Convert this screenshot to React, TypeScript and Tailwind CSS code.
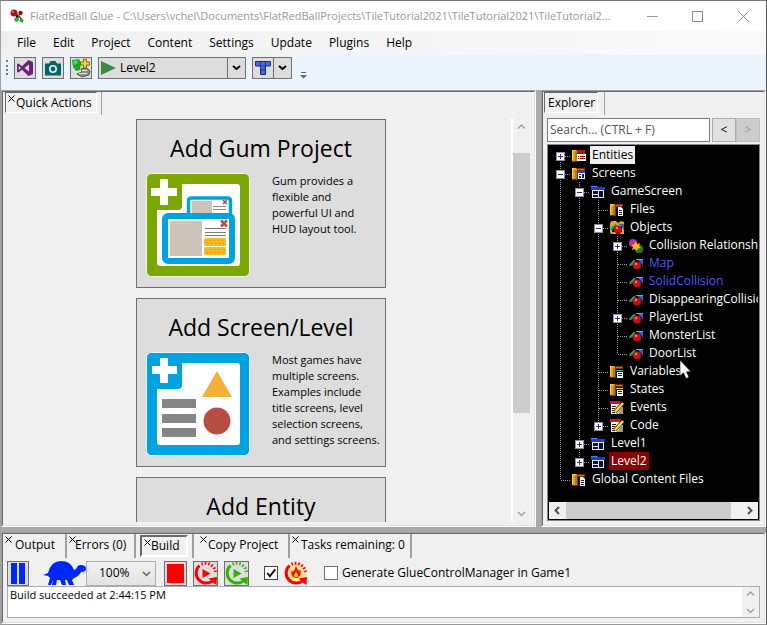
import type { ReactNode } from "react";

/* ---------- shared pieces ---------- */

function Panel({ className, children }: { className: string; children: ReactNode }) {
  return (
    <section className={"flex min-w-0 flex-col border border-t-[#a0a0a0] border-r-white border-b-white border-l-[#a0a0a0] " + className}>
      <div className="flex min-h-0 min-w-0 flex-1 flex-col border border-t-[#696969] border-r-[#e3e3e3] border-b-[#e3e3e3] border-l-[#696969] bg-[#f0f0f0]">
        {children}
      </div>
    </section>
  );
}

function CloseMark() {
  return (
    <svg viewBox="0 0 7 7" className="absolute top-0.5 left-0.5 h-[7px] w-[7px]" fill="none" stroke="#000" strokeWidth="1">
      <path d="M.5.5l6 6M6.5.5l-6 6" />
    </svg>
  );
}

function Chevron({ dir, className }: { dir: "up" | "down" | "left" | "right"; className: string }) {
  const d = {
    up: "M1 6.500L4.500 3L8 6.500",
    down: "M1 3L4.500 6.500L8 3",
    left: "M6 1L2.500 4.500L6 8",
    right: "M3 1L6.500 4.500L3 8",
  }[dir];
  return (
    <svg viewBox="0 0 9 9" className={className} fill="none" stroke="currentColor" strokeWidth="1.500">
      <path d={d} />
    </svg>
  );
}

function Arrow() {
  return (
    <svg viewBox="0 0 9 6" className="h-1.5 w-[9px]" fill="none" stroke="#000" strokeWidth="2">
      <path d="M1 1l3.500 3L8 1" />
    </svg>
  );
}

/* ---------- toolbar ---------- */

const toolButton = "flex h-[22px] w-[22px] items-center justify-center border border-[#707070] bg-[#ddd]";

function StudioIcon() {
  return (
    <svg viewBox="0 0 18 18" className="h-[18px] w-[18px]">
      <path fill="#68217a" fillRule="evenodd" d="M12.500 1l4.500 2v12l-4.500 2L6 10.800 2.500 13.500 1 12.700V5.300l1.500-.8L6 7.200zM13 5.500L8.500 9l4.500 3.500zM2.700 7v4L5 9z" />
    </svg>
  );
}

function CameraIcon() {
  return (
    <svg viewBox="0 0 18 18" className="h-[18px] w-[18px]">
      <path fill="#00666a" d="M1 4.500h4L6.500 2h5L13 4.500h4v12H1z" />
      <circle cx="9" cy="10" r="3.200" fill="none" stroke="#e4f2f2" strokeWidth="1.600" />
    </svg>
  );
}

function ImportIcon() {
  return (
    <svg viewBox="0 0 20 20" className="h-5 w-5">
      <path fill="#1fa32c" d="M1 2l7-1 2 4-1 7-4 1-3-4z" />
      <path fill="#56d657" d="M2 3l4-1 1 3-4 2z" />
      <path fill="#8d8d86" stroke="#444" strokeWidth=".8" d="M10 11l5-2 4 4-1 4-7 2-5-3 5-2z" />
      <path stroke="#e8e8e8" d="M8 15.500h8M11 12.500h5" />
      <path fill="#f5d033" stroke="#6b5200" strokeWidth=".8" d="M12.500 1h3v3h3v3h-3v3h-3V7h-3V4h3z" />
    </svg>
  );
}

function TileIcon() {
  return (
    <svg viewBox="0 0 16 14" className="h-3.5 w-4">
      <path fill="#4a66e0" stroke="#1c2b80" d="M.5.500h15v4.500h-5v8.500h-5V5H.500z" />
      <path stroke="#1c2b80" strokeWidth=".8" d="M5.500 1v4h5V1M5.500 9h5" fill="none" />
    </svg>
  );
}

/* ---------- quick action artwork ---------- */

function GumArt() {
  return (
    <svg viewBox="0 0 104 104" className="h-[104px] w-[104px] shrink-0">
      <rect x=".5" y=".5" width="103" height="103" rx="5" fill="#7aa800" stroke="#f2f5e6" />
      <path fill="#fff" d="M36 11h55q3 0 3 3v76q0 3-3 3H14q-3 0-3-3V37h21q4 0 4-4z" />
      <path fill="#fff" d="M14 6h8v9h9v8h-9v9h-8v-9H5v-8h9z" />
      <path fill="#fff" stroke="#00a3e2" strokeWidth="3.500" d="M42.500 42V28q0-3 3-3h36q3 0 3 3v14" />
      <path fill="#cdc5b9" d="M46 28h20v12H46z" />
      <path stroke="#8b8b8b" d="M67 33.500h13M67 36.500h13" />
      <path stroke="#b54e40" strokeWidth="1.600" d="M77 27l4 4M81 27l-4 4" />
      <rect x="19" y="43" width="67" height="45" rx="3" fill="#fff" stroke="#00a3e2" strokeWidth="6" />
      <path fill="#cdc5b9" d="M24 48h32v35H24z" />
      <path stroke="#7d7d7d" d="M59 55.500h21M59 59.500h21M59 62.500h21" />
      <path stroke="#b54e40" strokeWidth="2.500" d="M75 47.500l6 6M81 47.500l-6 6" />
      <rect x="58" y="65" width="22" height="8" rx="1.500" fill="#f5bb1b" />
      <rect x="58" y="74" width="22" height="8" rx="1.500" fill="#f5bb1b" />
      <path stroke="#e8892b" strokeDasharray="1 3" d="M60 67.500h19M61 70.500h18M60 76.500h19M61 79.500h18" />
    </svg>
  );
}

function ScreenArt() {
  return (
    <svg viewBox="0 0 104 104" className="h-[104px] w-[104px] shrink-0">
      <rect x=".5" y=".5" width="103" height="103" rx="5" fill="#00a3e2" stroke="#e8f6fc" />
      <path fill="#fff" d="M36 11h55q3 0 3 3v76q0 3-3 3H14q-3 0-3-3V37h21q4 0 4-4z" />
      <path fill="#fff" d="M14 6h8v8h9v8h-9v9h-8v-9H6v-8h8z" />
      <path fill="#858585" d="M16 47h34v9H16zM16 62h34v9H16zM16 76h34v9H16z" />
      <path fill="#f2b13b" d="M71 19l15 26H56z" />
      <circle cx="71" cy="69" r="13.500" fill="#b54e40" />
    </svg>
  );
}

function ActionCard({ title, lines, art }: { title: string; lines: string[]; art?: ReactNode }) {
  return (
    <button type="button" className="flex h-[169px] w-[250px] shrink-0 flex-col border border-[#707070] bg-[#ddd] pt-3 pl-[9px] text-left">
      <span className="mb-[9px] w-full pr-[9px] text-center text-[23px] leading-8">{title}</span>
      <span className="flex gap-[22px]">
        {art}
        <span className="flex flex-col text-[11px] leading-4 whitespace-nowrap">
          {lines.map((l) => (
            <span key={l}>{l}</span>
          ))}
        </span>
      </span>
    </button>
  );
}

/* ---------- explorer tree ---------- */

type Icon = "entities" | "screens" | "screen" | "files" | "objects" | "collision" | "object" | "variables" | "states" | "code";

function Folder({ children }: { children: ReactNode }) {
  return (
    <>
      <path fill="#7a2f06" d="M1 2h13v3H7v9H1z" />
      <path fill="#e0a01a" d="M1 2h4l1 1v10H1z" />
      <path fill="#f6cf4a" d="M1 2h3v1H2v9H1z" />
      <path fill="#b87a10" d="M4 4h2v9H4zM7 3h6v1H7z" />
      {children}
    </>
  );
}

function ObjectShapes() {
  return (
    <>
      <path fill="#0b7a52" d="M1 10l5-6 2 1-4 5z" />
      <path fill="#35b98a" d="M1 9l5-5 1 .5L2 9.500z" />
      <path fill="#1f66d8" d="M8 3h7v7l-2-3-2-2z" />
      <path fill="#6aa6f5" d="M8 3h7v1H8z" />
      <circle cx="9" cy="9.500" r="4" fill="#cc1010" />
      <circle cx="8" cy="8" r="1.200" fill="#ff7a6a" />
      <path fill="#6d0505" d="M6 12q3 2 6 0-1 2-3 2t-3-2z" />
    </>
  );
}

function TreeIcon({ icon }: { icon: Icon }) {
  let art: ReactNode;
  switch (icon) {
    case "entities":
      art = (
        <Folder>
          <path fill="#c81010" d="M6 2h8v2H6zM7 5h7v1H7z" />
          <path fill="#fff" d="M6 6h9v7H6z" />
          <path stroke="#a00" d="M7 8.500h1M9 8.500h5M7 10.500h1M9 10.500h5" />
        </Folder>
      );
      break;
    case "screens":
      art = (
        <Folder>
          <path fill="#1743d8" d="M7 5h7v2H7z" />
          <path fill="#fff" d="M7 7h7v6H7z" />
          <path fill="#14206b" d="M8 8h2v1H8zM8 10h2v2H8zM11 8h2v4h-2z" />
        </Folder>
      );
      break;
    case "screen":
      art = (
        <>
          <path fill="#123fe0" d="M1 2h6l1 1h7v3H1z" />
          <path fill="#5b86ff" d="M1 2h6v1H1z" />
          <path fill="#e6e9f5" d="M2 6h12v8H2z" />
          <path fill="#0a0f38" d="M3 7h5v3H3zM3 11h5v2H3zM9 7h4v6H9z" />
        </>
      );
      break;
    case "files":
      art = (
        <Folder>
          <path fill="#000" d="M7 5h8v9H7z" />
          <path fill="#fff" d="M9 5h3l2 2v7H9z" />
          <path stroke="#222" d="M10 8.500h3M10 10.500h3M10 12.500h3" />
        </Folder>
      );
      break;
    case "variables":
      art = (
        <Folder>
          <path fill="#21b7b5" d="M7 6h7v1H7z" />
          <path fill="#fff" d="M8 8h6v6H8z" />
          <path stroke="#222" d="M9 9.500h4M9 11.500h4" />
        </Folder>
      );
      break;
    case "states":
      art = (
        <Folder>
          <path fill="#f5d33a" d="M7 6h7v1H7z" />
          <path fill="#fff" d="M8 8h6v6H8z" />
          <path stroke="#222" d="M9 9.500h4M9 11.500h4" />
        </Folder>
      );
      break;
    case "objects":
      art = (
        <>
          <path fill="#e3aa18" d="M1 4q0-3 3-3h3l2 2 3-2 3 1v12h-4l-2-2-2 2H2l-1-2z" />
          <path fill="#000" d="M3 6h10v6H3z" />
          <ObjectShapes />
        </>
      );
      break;
    case "collision":
      art = (
        <>
          <circle cx="5" cy="5" r="4" fill="#b030b0" />
          <circle cx="11" cy="11" r="4" fill="#12820f" stroke="#555" strokeWidth=".8" />
          <path fill="#ffb520" d="M8 3l1 3 3-1-1 3 2 2-3 .5-1 2-2-1.500-3 1 1-3-1-2 2-1z" />
        </>
      );
      break;
    case "code":
      art = (
        <>
          <path fill="#f2f2f2" d="M2 4h10v10H2z" />
          <path fill="#e31212" d="M1 1h11l-1 3H1z" />
          <path stroke="#222" d="M3 6.500h4M3 8.500h3M3 10.500h2M3 12.500h3" />
          <path stroke="#3d3000" strokeWidth="4" d="M6 12l8-9" />
          <path stroke="#ffd92e" strokeWidth="2.400" d="M6 12l8-9" />
          <path fill="#999" d="M12 7h2v7H7l3-2z" />
        </>
      );
      break;
    default:
      art = <ObjectShapes />;
  }
  return (
    <svg viewBox="0 0 16 16" className="mt-0.5 mr-[3px] ml-px h-4 w-4 shrink-0">
      {art}
    </svg>
  );
}

/* Guide cells: "|" passes through, "t" branches, "l" ends, "r" starts, " " is empty. */
function Guide({ kind, box }: { kind: string; box?: string }) {
  const lines: Record<string, string> = {
    "|": "M9.500 0V18",
    t: "M9.500 0V18M10 10.500H19",
    l: "M9.500 0V10M10 10.500H19",
    r: "M9.500 10V18M10 10.500H19",
    " ": "",
  };
  return (
    <svg viewBox="0 0 19 18" className="h-[18px] w-[19px] shrink-0" shapeRendering="crispEdges">
      <path d={lines[kind]} stroke="#9a9a9a" strokeDasharray="1 1" />
      {box && (
        <>
          <rect x="5.500" y="6.500" width="8" height="8" fill="#fff" stroke="#919191" />
          <path d={box === "+" ? "M7 10.500h5M9.500 8v5" : "M7 10.500h5"} stroke="#23379b" />
        </>
      )}
    </svg>
  );
}

type Node = { g: string; box?: string; icon: Icon; text: string; tone?: string };

const nodes: Node[] = [
  { g: "r", box: "+", icon: "entities", text: "Entities", tone: "bg-[#f0f0f0] text-black" },
  { g: "t", box: "-", icon: "screens", text: "Screens" },
  { g: "|t", box: "-", icon: "screen", text: "GameScreen" },
  { g: "||t", icon: "files", text: "Files" },
  { g: "||t", box: "-", icon: "objects", text: "Objects" },
  { g: "|||t", box: "+", icon: "collision", text: "Collision Relationships" },
  { g: "|||t", icon: "object", text: "Map", tone: "text-[#4a5cf0]" },
  { g: "|||t", icon: "object", text: "SolidCollision", tone: "text-[#4a5cf0]" },
  { g: "|||t", icon: "object", text: "DisappearingCollision" },
  { g: "|||t", box: "+", icon: "object", text: "PlayerList" },
  { g: "|||t", icon: "object", text: "MonsterList" },
  { g: "|||l", icon: "object", text: "DoorList" },
  { g: "||t", icon: "variables", text: "Variables" },
  { g: "||t", icon: "states", text: "States" },
  { g: "||t", icon: "code", text: "Events" },
  { g: "||l", box: "+", icon: "code", text: "Code" },
  { g: "|t", box: "+", icon: "screen", text: "Level1" },
  { g: "|l", box: "+", icon: "screen", text: "Level2", tone: "bg-[#8b0000] text-white" },
  { g: "l", icon: "files", text: "Global Content Files" },
];

function Pointer() {
  return (
    <svg viewBox="0 0 12 19" className="absolute top-4 left-8 z-10 h-[19px] w-3">
      <path fill="#fff" stroke="#000" strokeWidth=".6" d="M1 0v16l3.500-3.300L7 18.500l3-1.200-2.500-5.500H12z" />
    </svg>
  );
}

function Tree() {
  return (
    <ul className="min-h-0 flex-1 overflow-hidden pl-0.5">
      {nodes.map((n) => (
        <li key={n.text} className="flex h-[18px]">
          {n.g.split("").map((k, i) => (
            <Guide key={i} kind={k} box={i === n.g.length - 1 ? n.box : undefined} />
          ))}
          <TreeIcon icon={n.icon} />
          <span className={"relative px-0.5 leading-[17px] whitespace-nowrap " + (n.tone ?? "text-white")}>
            {n.text}
            {n.text === "DoorList" && <Pointer />}
          </span>
        </li>
      ))}
    </ul>
  );
}

/* ---------- bottom panel ---------- */

function Tab({ label, active, className }: { label: string; active?: boolean; className: string }) {
  return (
    <div className="flex border-r-2 border-r-[#a0a0a0]">
      <button
        type="button"
        className={
          "relative h-[22px] text-left whitespace-nowrap " +
          (active ? "mx-1 mt-px border-2 border-t-[#696969] border-r-white border-b-white border-l-[#696969] " : "") +
          className
        }
      >
        <CloseMark />
        {label}
      </button>
    </div>
  );
}

function LoopArrow({ color, children }: { color: string; children: ReactNode }) {
  return (
    <svg viewBox="0 0 25 25" className="h-[25px] w-[25px] shrink-0">
      {children}
      <path fill="none" stroke={color} strokeWidth="3" d="M6.500 4.500A9.500 9.500 0 1 0 20 19.500" />
      <path fill="none" stroke={color} strokeWidth="3" strokeDasharray="1.600 1.800" d="M8.500 3.200A10 10 0 0 1 22.500 11" />
      <path fill={color} d="M15.500 17.500l8.500-1.500-.5 8-3-2z" />
    </svg>
  );
}

function Turtle() {
  return (
    <svg viewBox="0 0 43 26" className="h-[26px] w-[43px]" fill="#0026ff">
      <path d="M0 15l5-2Q8 1 18 1q10 0 13 9l3-2q0-3 4-3 5 0 5 4 0 3-5 3-2 4-7 6l-2 2 2 5h-5l-2-5h-2l1 5h-4l-2-5h-3l-1 5h-4l1-5-2 5H5l2-7-2-2z" />
    </svg>
  );
}

function TextBox() {
  return (
    <div className="mx-1 mb-1 flex min-h-0 flex-1 border border-[#abadb3] bg-white">
      <textarea
        aria-label="Build output"
        readOnly
        defaultValue="Build succeeded at 2:44:15 PM"
        className="min-w-0 flex-1 resize-none overflow-hidden px-0.5 text-[11px] leading-4 outline-none"
      />
      <div className="flex w-[17px] flex-col items-center justify-between bg-[#f0f0f0] py-0.5 text-[#a0a0a0]">
        <Chevron dir="up" className="h-[9px] w-[9px]" />
        <Chevron dir="down" className="h-[9px] w-[9px]" />
      </div>
    </div>
  );
}

/* ---------- window ---------- */

export default function App() {
  return (
    <div className="flex h-screen flex-col overflow-hidden border border-t-[#777] border-r-[#555] border-b-[#999] border-l-[#a0a0a0] bg-[#a9a9a9] font-['Open_Sans','Noto_Sans',sans-serif] text-[12px] text-black">
      <header className="flex h-[30px] shrink-0 items-center bg-white pl-[9px] text-[#999]">
        <svg viewBox="0 0 14 14" className="mr-1.5 h-3.5 w-3.5 shrink-0">
          <path stroke="#555" strokeWidth="1.500" d="M5 4l4 3-2 4M9 7l3 4" />
          <circle cx="4" cy="4" r="3.500" fill="#a91414" />
          <circle cx="10.500" cy="4" r="2.200" fill="#8c1818" />
          <circle cx="6.500" cy="10.500" r="2.200" fill="#23b020" />
          <circle cx="11.500" cy="11.500" r="2" fill="#23b020" />
          <circle cx="3" cy="3" r="1" fill="#e67a7a" />
        </svg>
        <h1 className="min-w-0 flex-1 text-[11px] whitespace-nowrap">
          FlatRedBall Glue - C:\Users\vchel\Documents\FlatRedBallProjects\TileTutorial2021\TileTutorial2021\TileTutorial2...
        </h1>
        <button type="button" aria-label="Minimize" className="flex w-[46px] shrink-0 justify-center">
          <svg viewBox="0 0 11 11" className="h-[11px] w-[11px]" stroke="#999"><path d="M0 5.500h11" /></svg>
        </button>
        <button type="button" aria-label="Maximize" className="flex w-[45px] shrink-0 justify-center">
          <svg viewBox="0 0 11 11" className="h-[11px] w-[11px]" stroke="#888" fill="none"><path d="M.5.500h10v10H.500z" /></svg>
        </button>
        <button type="button" aria-label="Close" className="flex w-[46px] shrink-0 justify-center">
          <svg viewBox="0 0 11 11" className="h-[11px] w-[11px]" stroke="#888"><path d="M.5.500l10 10M10.500.500l-10 10" /></svg>
        </button>
      </header>

      <nav className="flex h-6 shrink-0 items-center gap-[17px] bg-linear-to-r from-[#f0f0f0] to-[#fafafa] pl-4">
        {["File", "Edit", "Project", "Content", "Settings", "Update", "Plugins", "Help"].map((m) => (
          <button type="button" key={m}>{m}</button>
        ))}
      </nav>

      <div className="flex h-[35px] shrink-0 gap-1.5 bg-[#ebf4fd] pt-0.5 pl-[5px]">
        <div className="mt-[3px] h-[15px] w-0 border-l-2 border-dotted border-[#777]" />
        <button type="button" aria-label="Open in Visual Studio" className={toolButton}><StudioIcon /></button>
        <button type="button" aria-label="Camera settings" className={toolButton}><CameraIcon /></button>
        <button type="button" aria-label="Add plugin" className={toolButton}><ImportIcon /></button>
        <div className="flex h-[22px] w-[148px] border border-[#707070] bg-[#ddd]">
          <button type="button" aria-label="Run" className="pl-0.5">
            <svg viewBox="0 0 15 14" className="h-3.5 w-[15px]"><path fill="#3f8a42" d="M0 0l15 7-15 7z" /></svg>
          </button>
          <select aria-label="Startup screen" className="min-w-0 flex-1 appearance-none pl-1 outline-none">
            <option>Level2</option>
          </select>
          <div className="flex w-[18px] items-center justify-center border-l border-[#707070]"><Arrow /></div>
        </div>
        <div className="flex h-[22px] w-10 border border-[#707070] bg-[#ddd]">
          <button type="button" aria-label="Open Tiled" className="flex flex-1 items-center justify-center"><TileIcon /></button>
          <button type="button" aria-label="Tiled options" className="flex w-[18px] items-center justify-center border-l border-[#707070]"><Arrow /></button>
        </div>
        <svg viewBox="0 0 7 7" className="mt-[15px] ml-0.5 h-[7px] w-[7px]"><path fill="#666" d="M1 0h5v1H1zM0 3h7L3.500 6.500z" /></svg>
      </div>

      <div className="flex min-h-0 flex-1 gap-[5px]">
        <Panel className="flex-1">
          <div className="flex h-[23px] shrink-0">
            <div className="flex border-r border-[#a0a0a0] pr-1 pl-0.5">
              <button type="button" className="relative mb-0.5 w-[92px] border border-t-[#696969] border-r-white border-b-white border-l-[#696969] pl-2.5 text-left whitespace-nowrap">
                <CloseMark />
                Quick Actions
              </button>
            </div>
          </div>
          <div className="my-[3px] flex min-h-0 flex-1 pr-1">
            <div className="flex min-w-0 flex-1 flex-col items-center gap-2.5 overflow-hidden border-r-2 border-white pt-px pl-2">
              <ActionCard title="Add Gum Project" art={<GumArt />} lines={["Gum provides a", "flexible and", "powerful UI and", "HUD layout tool."]} />
              <ActionCard
                title="Add Screen/Level"
                art={<ScreenArt />}
                lines={["Most games have", "multiple screens.", "Examples include", "title screens, level", "selection screens,", "and settings screens."]}
              />
              <ActionCard title="Add Entity" lines={[]} />
            </div>
            <div className="flex w-[17px] flex-col items-center text-[#a0a0a0]">
              <Chevron dir="up" className="my-1 h-[9px] w-[9px]" />
              <div className="mt-[18px] h-[260px] w-full bg-[#cdcdcd]" />
              <Chevron dir="down" className="mt-auto mb-1 h-[9px] w-[9px]" />
            </div>
          </div>
        </Panel>

        <Panel className="w-[225px]">
          <div className="flex h-[23px] shrink-0">
            <div className="flex border-r border-[#a0a0a0] pr-1.5 pl-px">
              <button type="button" className="mb-0.5 w-[54px] border border-t-[#696969] border-r-white border-b-white border-l-[#696969] pl-[3px] text-left">
                Explorer
              </button>
            </div>
          </div>
          <div className="mx-1 mt-[3px] mb-0.5 flex h-6 shrink-0 gap-0.5">
            <input
              type="text"
              aria-label="Search"
              placeholder="Search... (CTRL + F)"
              className="min-w-0 flex-1 border border-[#7a7a7a] bg-white px-0.5 outline-none placeholder:text-[#555]"
            />
            <div className="flex">
              <button type="button" className="w-6 border border-[#adadad] bg-[#e1e1e1]">&lt;</button>
              <button type="button" disabled className="w-6 border border-[#bfbfbf] bg-[#ccc] text-[#999]">&gt;</button>
            </div>
          </div>
          <div className="mx-1 mb-1 flex min-h-0 flex-1 flex-col border border-[#828790] bg-black p-px">
            <Tree />
            <div className="flex h-[17px] shrink-0 items-center bg-[#f0f0f0] text-[#505050]">
              <Chevron dir="left" className="mx-1 h-[9px] w-[9px] stroke-2" />
              <div className="h-full w-[165px] bg-[#cdcdcd]" />
              <Chevron dir="right" className="mr-1 ml-auto h-[9px] w-[9px] stroke-2" />
            </div>
          </div>
        </Panel>
      </div>

      <Panel className="mt-[5px] h-[92px] shrink-0">
        <div className="flex h-6 shrink-0">
          <Tab label="Output" className="w-[62px] pl-3" />
          <Tab label="Errors (0)" className="w-[67px] pl-2" />
          <Tab label="Build" active className="w-12 pl-[9px] leading-4" />
          <Tab label="Copy Project" className="ml-1 w-[90px] pl-2.5" />
          <Tab label="Tasks remaining: 0" className="w-[120px] pl-[11px]" />
        </div>
        <div className="flex h-7 shrink-0 items-center pt-0.5 pl-1">
          <button type="button" aria-label="Pause" className="flex h-[25px] w-[22px] items-center justify-center border border-[#707070] bg-[#ddd]">
            <svg viewBox="0 0 14 21" className="h-[21px] w-3.5" fill="#0026ff"><path d="M0 0h6v21H0zM8 0h6v21H8z" /></svg>
          </button>
          <div className="ml-3.5"><Turtle /></div>
          <div className="relative">
            <select aria-label="Game speed" className="h-[25px] w-[70px] appearance-none border border-[#adadad] bg-linear-to-b from-[#f0f0f0] to-[#e3e3e3] pl-3 outline-none">
              <option>100%</option>
            </select>
            <Chevron dir="down" className="pointer-events-none absolute top-2 right-[5px] h-[9px] w-[9px] text-[#606060]" />
          </div>
          <button type="button" aria-label="Stop" className="ml-2 flex h-[25px] w-[23px] items-center justify-center border border-[#707070] bg-[#ddd]">
            <span className="h-[19px] w-[17px] bg-[#f00]" />
          </button>
          <button type="button" aria-label="Restart game" className="ml-1.5 flex h-[25px] w-[25px] items-center justify-center border border-[#707070] bg-[#ddd]">
            <LoopArrow color="#f00"><path fill="#f00" d="M9.500 8l8 4.500-8 4.500z" /></LoopArrow>
          </button>
          <button type="button" aria-label="Restart at screen" className="ml-1.5 flex h-[25px] w-[25px] items-center justify-center border border-[#707070] bg-[#ddd]">
            <LoopArrow color="#2fb400"><path fill="#2fb400" d="M9.500 8l8 4.500-8 4.500z" /></LoopArrow>
          </button>
          <span className="relative ml-[15px] flex h-3.5 w-3.5">
            <input type="checkbox" defaultChecked aria-label="Restart on change" className="h-3.5 w-3.5 appearance-none border border-[#444] bg-white" />
            <svg viewBox="0 0 13 13" className="pointer-events-none absolute inset-0" fill="none" stroke="#111" strokeWidth="1.800"><path d="M3 6.500l2.500 3L10.500 3" /></svg>
          </span>
          <span className="ml-[5px]">
            <LoopArrow color="#f00">
              <circle cx="13" cy="12.500" r="10" fill="#ffe09a" />
              <path fill="#e81b05" d="M13 5q1 3 3 5l1-2q2 5-1 8-3 2-6 0-3-3-1-7l1 2q2-3 3-6z" />
              <path fill="#ffcd1c" d="M13 11q3 3 1.500 5h-3q-1-2 1.500-5z" />
            </LoopArrow>
          </span>
          <label className="ml-4 flex items-center gap-1 text-[12px] whitespace-nowrap">
            <input type="checkbox" className="h-3.5 w-3.5 appearance-none border border-[#707070] bg-white" />
            Generate GlueControlManager in Game1
          </label>
        </div>
        <TextBox />
      </Panel>
    </div>
  );
}
